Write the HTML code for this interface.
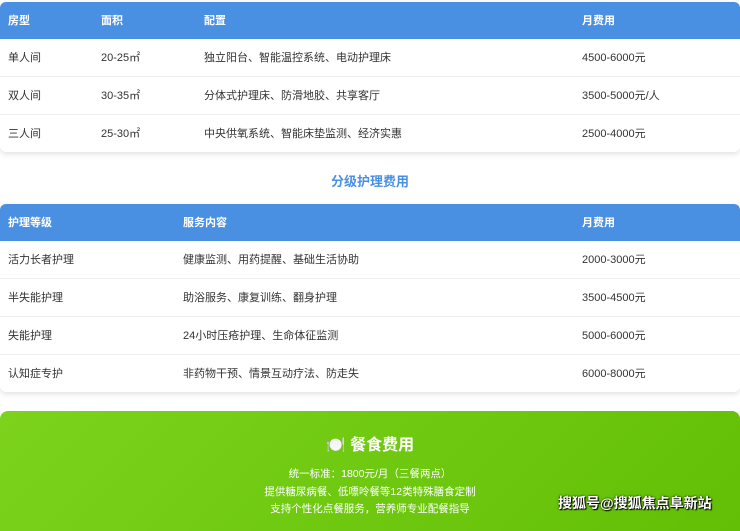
<!DOCTYPE html>
<html><head><meta charset="utf-8"><style>
body{margin:0;width:740px;height:519px;overflow:hidden;background:#fff;font-family:"Liberation Sans","Noto Sans CJK SC",sans-serif;font-size:11px;color:#333}
.card{position:absolute;left:0;width:740px;border-radius:6px;box-shadow:0 2px 6px rgba(0,0,0,.12);overflow:hidden;background:#fff}
.h{height:37px;background:#4a90e2;color:#fff;font-weight:bold;position:relative}
.r{height:37px;border-bottom:1px solid #eee;position:relative}
.r:last-child{border-bottom:none}
.c{position:absolute;top:1px;line-height:37px;white-space:nowrap}
.title{position:absolute;top:171px;left:0;width:740px;text-align:center;color:#4a90e2;font-weight:bold;font-size:13px}
.green{position:absolute;left:0;top:411px;width:740px;height:120px;border-radius:8px 8px 0 0;background:linear-gradient(135deg,#7dd31c,#62bf05);color:#fff;text-align:center}
</style></head><body>
<div class="card" style="top:2px">
<div class="h"><span class="c" style="left:8px">房型</span><span class="c" style="left:101px">面积</span><span class="c" style="left:204px">配置</span><span class="c" style="left:582px">月费用</span></div>
<div class="r"><span class="c" style="left:8px">单人间</span><span class="c" style="left:101px">20-25㎡</span><span class="c" style="left:204px">独立阳台、智能温控系统、电动护理床</span><span class="c" style="left:582px">4500-6000元</span></div>
<div class="r"><span class="c" style="left:8px">双人间</span><span class="c" style="left:101px">30-35㎡</span><span class="c" style="left:204px">分体式护理床、防滑地胶、共享客厅</span><span class="c" style="left:582px">3500-5000元/人</span></div>
<div class="r"><span class="c" style="left:8px">三人间</span><span class="c" style="left:101px">25-30㎡</span><span class="c" style="left:204px">中央供氧系统、智能床垫监测、经济实惠</span><span class="c" style="left:582px">2500-4000元</span></div>
</div>
<div class="title">分级护理费用</div>
<div class="card" style="top:204px">
<div class="h"><span class="c" style="left:8px">护理等级</span><span class="c" style="left:183px">服务内容</span><span class="c" style="left:582px">月费用</span></div>
<div class="r"><span class="c" style="left:8px">活力长者护理</span><span class="c" style="left:183px">健康监测、用药提醒、基础生活协助</span><span class="c" style="left:582px">2000-3000元</span></div>
<div class="r"><span class="c" style="left:8px">半失能护理</span><span class="c" style="left:183px">助浴服务、康复训练、翻身护理</span><span class="c" style="left:582px">3500-4500元</span></div>
<div class="r"><span class="c" style="left:8px">失能护理</span><span class="c" style="left:183px">24小时压疮护理、生命体征监测</span><span class="c" style="left:582px">5000-6000元</span></div>
<div class="r"><span class="c" style="left:8px">认知症专护</span><span class="c" style="left:183px">非药物干预、情景互动疗法、防走失</span><span class="c" style="left:582px">6000-8000元</span></div>
</div>
<div class="green">
<div style="position:absolute;top:20px;left:0;width:740px;font-size:16px;font-weight:bold">🍽️ 餐食费用</div>
<div style="position:absolute;top:55px;left:0;width:740px;font-size:10.5px;line-height:17.5px">统一标准：1800元/月（三餐两点）<br>提供糖尿病餐、低嘌呤餐等12类特殊膳食定制<br>支持个性化点餐服务，营养师专业配餐指导</div>
<div style="position:absolute;left:558px;top:82px;font-size:14px;font-weight:bold;text-shadow:0 0 2px #000,1px 1px 1px #000">搜狐号@搜狐焦点阜新站</div>
</div>
</body></html>
